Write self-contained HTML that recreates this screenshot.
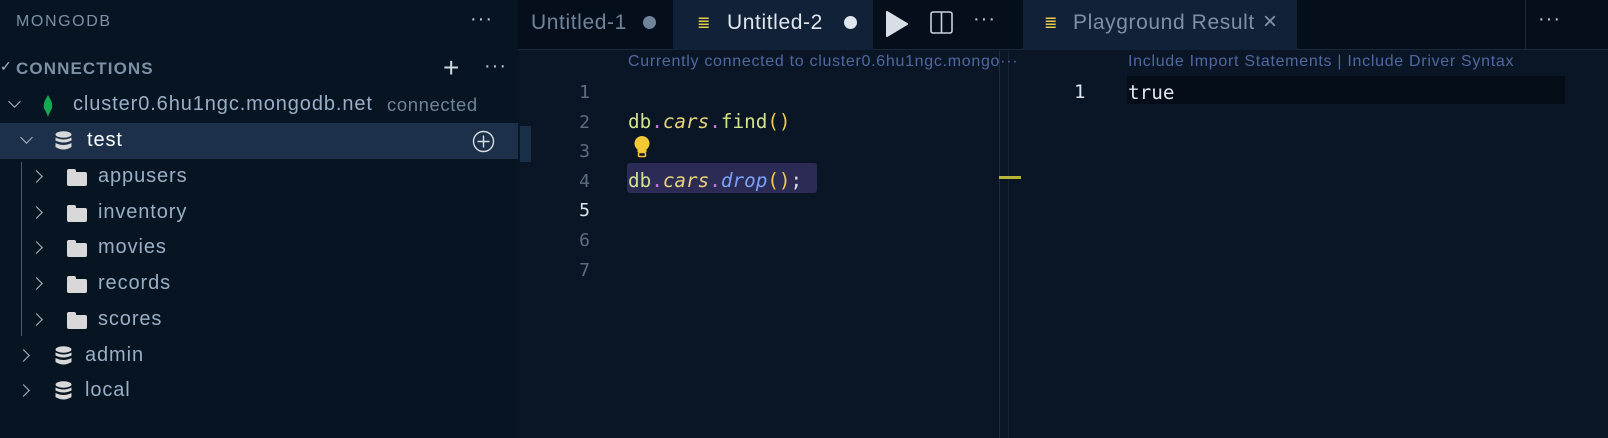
<!DOCTYPE html>
<html><head><meta charset="utf-8"><style>
*{margin:0;padding:0;box-sizing:border-box}
body{width:1608px;height:438px;background:#071523;font-family:"Liberation Sans",sans-serif;position:relative;overflow:hidden;color:#8da0b6}
.a{position:absolute;white-space:nowrap}
.mono{font-family:"DejaVu Sans Mono","Liberation Mono",monospace}
.row{position:absolute;left:0;width:518px;height:36px;font-size:20px;letter-spacing:.9px;color:#9aafc6}
.row span{position:absolute;top:6px}
.chev{position:absolute;width:9px;height:9px;border-right:1.6px solid #a9b8c8;border-bottom:1.6px solid #a9b8c8}
.folder{position:absolute;width:20px;height:14px;background:#d8d8d8;border-radius:2px}
.folder:before{content:"";position:absolute;left:0;top:-3px;width:9px;height:4px;background:#d8d8d8;border-radius:2px 2px 0 0}
.dbi{position:absolute;width:17px;height:20px}
.lens{font-size:16px;letter-spacing:.7px;color:#4f68a0}
</style></head><body>
<!-- sidebar -->
<div class="a" style="left:16px;top:13px;font-size:16px;color:#7d90a6;letter-spacing:1.6px">MONGODB</div>
<div class="a" style="left:470px;top:8px;font-size:20px;color:#b8c4d0;letter-spacing:1px">···</div>
<div class="a" style="left:0;top:58px;font-size:14px;color:#a9b8c8">✓</div>
<div class="a" style="left:16px;top:59px;font-size:17px;font-weight:bold;color:#7d90a6;letter-spacing:1.1px">CONNECTIONS</div>
<div class="a" style="left:443px;top:52px;font-size:28px;color:#d0d8e0;font-weight:300">+</div>
<div class="a" style="left:484px;top:55px;font-size:20px;color:#b8c4d0;letter-spacing:1px">···</div>

<div class="row" style="top:87px"><div class="chev" style="left:10px;top:10px;transform:rotate(45deg)"></div>
<svg class="a" style="left:42px;top:7px" width="12" height="24" viewBox="0 0 12 24"><path d="M6 1C9 6 11 10 10 14C9 17 7 19 6 23C5 19 3 17 2 14C1 10 3 6 6 1Z" fill="#13aa52"/></svg>
<span style="left:73px;color:#9aafc6">cluster0.6hu1ngc.mongodb.net</span><span style="left:387px;color:#6f8399;font-size:18.5px;top:7px;letter-spacing:.6px">connected</span></div>

<div class="row" style="top:123px;background:#1c3049"><div class="chev" style="left:22px;top:10px;transform:rotate(45deg)"></div>
<svg class="dbi" style="left:55px;top:8px" viewBox="0 0 17 20"><ellipse cx="8.5" cy="3.5" rx="8" ry="3.2" fill="#d8d8d8"/><path d="M.5 6.5q8 4 16 0v3q-8 4-16 0z" fill="#d8d8d8"/><path d="M.5 12q8 4 16 0v4q-8 5-16 0z" fill="#d8d8d8"/></svg>
<span style="left:87px;color:#fff">test</span>
<svg class="a" style="left:472px;top:7px" width="23" height="23" viewBox="0 0 23 23"><circle cx="11.5" cy="11.5" r="10" fill="none" stroke="#d8dee6" stroke-width="1.4"/><path d="M11.5 5.5v12M5.5 11.5h12" stroke="#d8dee6" stroke-width="1.4"/></svg></div>

<div class="a" style="left:21px;top:162px;width:1px;height:174px;background:#4a5a6a"></div>

<div class="row" style="top:159px"><div class="chev" style="left:32px;top:13px;transform:rotate(-45deg)"></div><div class="folder" style="left:67px;top:13px"></div><span style="left:98px">appusers</span></div>
<div class="row" style="top:195px"><div class="chev" style="left:32px;top:13px;transform:rotate(-45deg)"></div><div class="folder" style="left:67px;top:13px"></div><span style="left:98px">inventory</span></div>
<div class="row" style="top:230px"><div class="chev" style="left:32px;top:13px;transform:rotate(-45deg)"></div><div class="folder" style="left:67px;top:13px"></div><span style="left:98px">movies</span></div>
<div class="row" style="top:266px"><div class="chev" style="left:32px;top:13px;transform:rotate(-45deg)"></div><div class="folder" style="left:67px;top:13px"></div><span style="left:98px">records</span></div>
<div class="row" style="top:302px"><div class="chev" style="left:32px;top:13px;transform:rotate(-45deg)"></div><div class="folder" style="left:67px;top:13px"></div><span style="left:98px">scores</span></div>
<div class="row" style="top:338px"><div class="chev" style="left:19px;top:13px;transform:rotate(-45deg)"></div>
<svg class="dbi" style="left:55px;top:8px" viewBox="0 0 17 20"><ellipse cx="8.5" cy="3.5" rx="8" ry="3.2" fill="#d8d8d8"/><path d="M.5 6.5q8 4 16 0v3q-8 4-16 0z" fill="#d8d8d8"/><path d="M.5 12q8 4 16 0v4q-8 5-16 0z" fill="#d8d8d8"/></svg><span style="left:85px">admin</span></div>
<div class="row" style="top:373px"><div class="chev" style="left:19px;top:13px;transform:rotate(-45deg)"></div>
<svg class="dbi" style="left:55px;top:8px" viewBox="0 0 17 20"><ellipse cx="8.5" cy="3.5" rx="8" ry="3.2" fill="#d8d8d8"/><path d="M.5 6.5q8 4 16 0v3q-8 4-16 0z" fill="#d8d8d8"/><path d="M.5 12q8 4 16 0v4q-8 5-16 0z" fill="#d8d8d8"/></svg><span style="left:85px">local</span></div>

<!-- editor area -->
<div class="a" style="left:518px;top:0;width:1090px;height:438px;background:#0a1626"></div>
<div class="a" style="left:518px;top:0;width:1090px;height:50px;background:#050f1b;border-bottom:1px solid #1a2737"></div>
<div class="a" style="left:673px;top:0;width:200px;height:50px;background:#112238"></div>
<div class="a" style="left:1023px;top:0;width:274px;height:50px;background:#112238"></div>
<div class="a" style="left:1525px;top:0;width:1px;height:50px;background:#1a2737"></div>

<div class="a" style="left:531px;top:11px;font-size:21px;letter-spacing:.6px;color:#6f8399">Untitled-1</div>
<div class="a" style="left:643px;top:16px;width:13px;height:13px;border-radius:50%;background:#6f8399"></div>
<div class="a" style="left:697px;top:13px;font-size:16px;color:#e8c94a">≣</div>
<div class="a" style="left:727px;top:11px;font-size:21px;letter-spacing:.6px;color:#dfe6ee">Untitled-2</div>
<div class="a" style="left:844px;top:16px;width:13px;height:13px;border-radius:50%;background:#dfe6ee"></div>
<svg class="a" style="left:885px;top:10px" width="24" height="28"><path d="M2 2L22 14L2 26Z" fill="#d8dee6" stroke="#d8dee6" stroke-linejoin="round" stroke-width="2"/></svg>
<svg class="a" style="left:930px;top:11px" width="23" height="23"><rect x="1" y="1" width="21" height="21" rx="2" fill="none" stroke="#c8d0da" stroke-width="1.6"/><path d="M11.5 1v21" stroke="#c8d0da" stroke-width="1.6"/></svg>
<div class="a" style="left:973px;top:8px;font-size:20px;color:#b8c4d0;letter-spacing:1px">···</div>
<div class="a" style="left:1044px;top:13px;font-size:16px;color:#e8c94a">≣</div>
<div class="a" style="left:1073px;top:11px;font-size:21px;letter-spacing:.6px;color:#7d90a6">Playground Result</div>
<div class="a" style="left:1263px;top:8px;font-size:24px;color:#8496aa">×</div>
<div class="a" style="left:1538px;top:8px;font-size:20px;color:#b8c4d0;letter-spacing:1px">···</div>

<div class="a" style="left:999px;top:51px;width:1px;height:387px;background:#1e2b3a"></div>
<div class="a" style="left:1008px;top:51px;width:1px;height:387px;background:#152232"></div>
<div class="a" style="left:999px;top:176px;width:22px;height:3px;background:#b8b63a"></div>
<div class="a" style="left:520px;top:126px;width:11px;height:36px;background:#1a3049"></div>

<div class="a lens" style="left:628px;top:53px">Currently connected to cluster0.6hu1ngc.mongo···</div>
<div class="a mono" style="left:560px;top:78px;width:30px;text-align:right;font-size:18px;line-height:29.6px;color:#5d6e80">1<br>2<br>3<br>4<br><span style="color:#e0e6ee">5</span><br>6<br>7</div>
<div class="a" style="left:627px;top:163px;width:190px;height:30px;background:#2c2b55;border-radius:3px"></div>
<div class="a mono" style="left:628px;top:107px;font-size:19.3px;line-height:29.6px;color:#d2e38a">db<span style="color:#c678dd">.</span><i style="color:#e8d27a">cars</i><span style="color:#c678dd">.</span>find<span style="color:#f2c94c">()</span></div>
<svg class="a" style="left:633px;top:135px" width="18" height="24" viewBox="0 0 18 24"><path d="M9 1a7.5 7.5 0 0 0-4.5 13.5v2.5h9v-2.5A7.5 7.5 0 0 0 9 1z" fill="#f4c834"/><rect x="5.5" y="17.5" width="7" height="4" rx="1" fill="none" stroke="#f4c834" stroke-width="1.5"/></svg>
<div class="a mono" style="left:628px;top:166px;font-size:19.3px;line-height:29.6px;color:#d2e38a">db<span style="color:#c678dd">.</span><i style="color:#e8d27a">cars</i><span style="color:#c678dd">.</span><i style="color:#7aa2f7">drop</i><span style="color:#f2c94c">()</span><span style="color:#d8dee6">;</span></div>

<div class="a lens" style="left:1128px;top:53px">Include Import Statements | Include Driver Syntax</div>
<div class="a" style="left:1127px;top:76px;width:438px;height:28px;background:#050e18"></div>
<div class="a mono" style="left:1074px;top:78px;font-size:19px;line-height:29.6px;color:#e0e6ee">1</div>
<div class="a mono" style="left:1128px;top:78px;font-size:19.3px;line-height:29.6px;color:#e0e6ee">true</div>
</body></html>
